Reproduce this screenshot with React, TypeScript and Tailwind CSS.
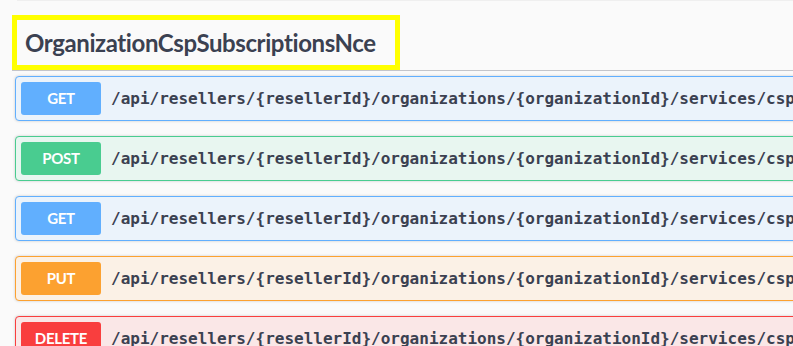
const ops = [
  { method: 'GET', badge: 'bg-[#61affe]', box: 'border-[#61affe] bg-[#ebf3fb]' },
  { method: 'POST', badge: 'bg-[#49cc90]', box: 'border-[#49cc90] bg-[#e8f6f0]' },
  { method: 'GET', badge: 'bg-[#61affe]', box: 'border-[#61affe] bg-[#ebf3fb]' },
  { method: 'PUT', badge: 'bg-[#fca130]', box: 'border-[#fca130] bg-[#fbf1e6]' },
  { method: 'DELETE', badge: 'bg-[#f93e3e]', box: 'border-[#f93e3e] bg-[#fae7e7]' },
];

const path = '/api/resellers/{resellerId}/organizations/{organizationId}/services/cspsubscriptionsnce';

export default function App() {
  return (
    <div className="w-[793px] h-[346px] overflow-hidden bg-[#fafafa]">
      <div className="w-[1200px]">
        <div className="ml-[17px] h-px bg-[#efefef]" />
        <div className="ml-[12px] border-b border-[#c4c5ca]">
          <div className="mt-[14px] w-[388px] h-[55px] border-[5px] border-[#ffff00] flex items-center pl-[8px]">
            <h3 className="text-[24px] font-bold text-[#3b4151] tracking-[-0.4px]" style={{ fontFamily: 'Lato, "Open Sans", sans-serif' }}>
              OrganizationCspSubscriptionsNce
            </h3>
          </div>
        </div>
        <div className="ml-[15px] mt-[5px] flex flex-col gap-[15px]">
          {ops.map((op, i) => (
            <div
              key={i}
              className={`flex items-center p-[5px] border rounded-[4px] shadow-[0_0_3px_rgba(0,0,0,0.19)] ${op.box}`}
            >
              <div
                className={`w-[80px] h-[33px] shrink-0 rounded-[3px] flex items-center justify-center text-white text-[15px] font-bold tracking-[-0.3px] ${op.badge}`}
                style={{ fontFamily: 'Lato, "Open Sans", sans-serif' }}
              >
                {op.method}
              </div>
              <span
                className="pl-[10px] whitespace-nowrap text-[16px] font-semibold text-[#3b4151]"
                style={{ fontFamily: '"DejaVu Sans Mono", "Liberation Mono", monospace' }}
              >
                {path}
              </span>
            </div>
          ))}
        </div>
      </div>
    </div>
  );
}
